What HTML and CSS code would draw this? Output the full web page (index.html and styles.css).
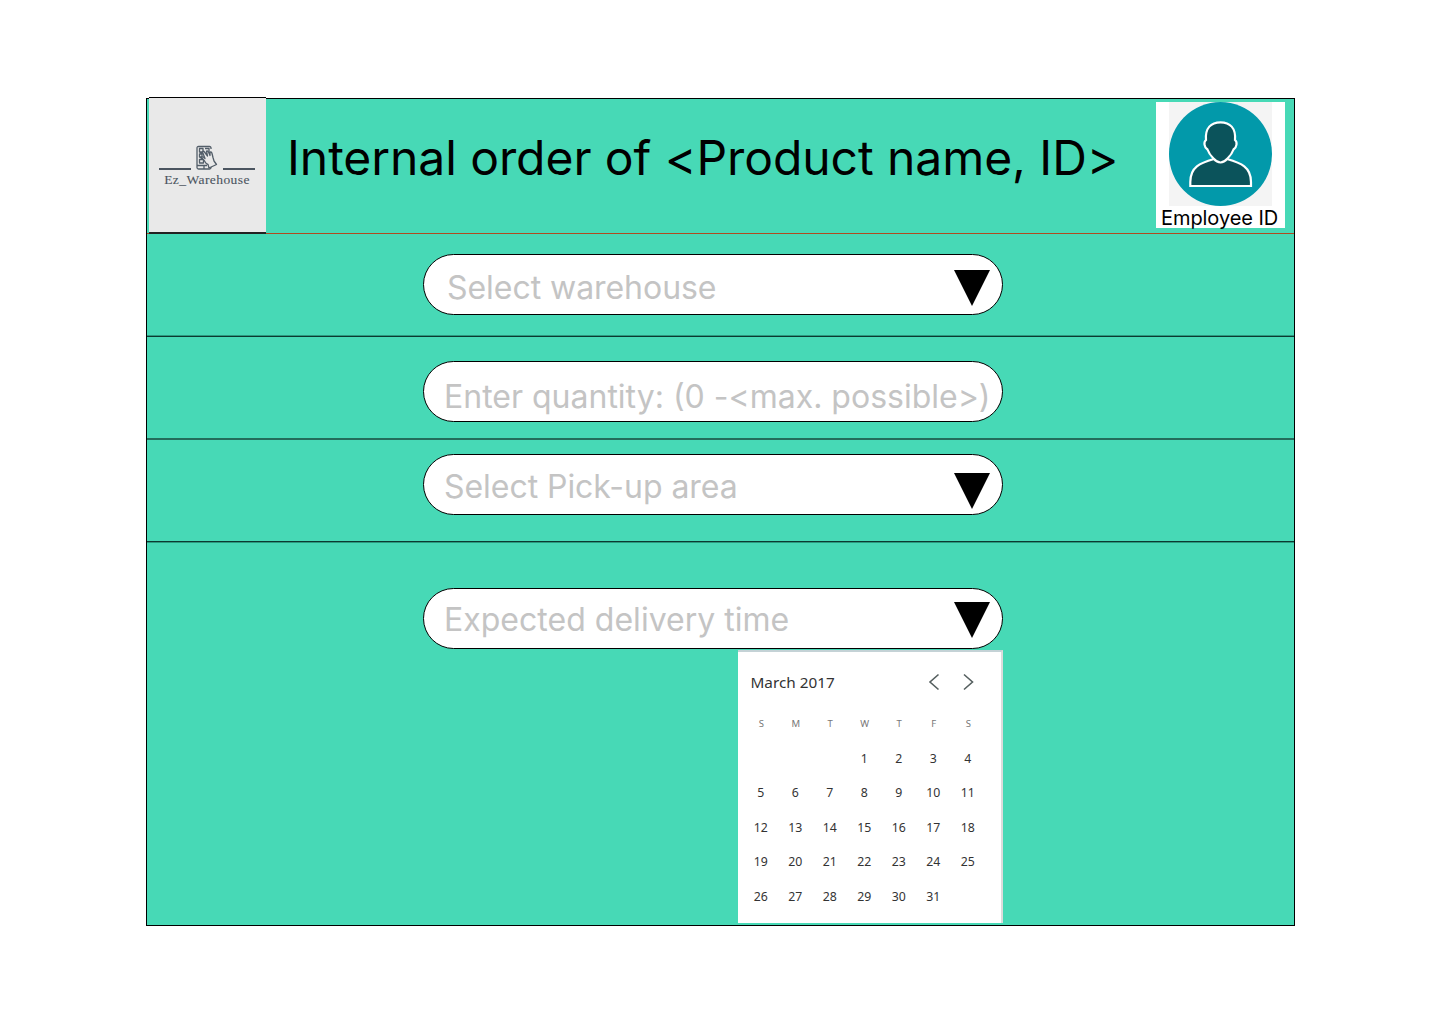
FILE: index.html
```html
<!DOCTYPE html>
<html lang="en">
<head>
<meta charset="utf-8">
<title>Internal order</title>
<link rel="stylesheet" href="styles.css">
</head>
<body>
<main class="frame">
  <header class="header">
    <div class="logo">
      <div class="logo-mark">
        <span class="logo-rule"></span>
        <svg class="logo-icon" width="22" height="26" viewBox="0 0 22 26" fill="none" stroke="#525d68" stroke-width="1.3" stroke-linejoin="round">
          <path d="M15 4V3Q15 1.500 13.500 1.500H2.500Q1 1.500 1 3V22.500Q1 24 2.500 24H13.500Q15 24 15 22.500V21M1 20.500H11"/>
          <path d="M3.500 3.500H7V7H3.500ZM9 3.500H13V7M3.500 9H6V12H3.500ZM3.500 14.500H7.500V18H3.500ZM3.500 7L7 9M3.500 12L7 14M8 21V24"/>
          <path fill="#e9e9e9" d="M8.500 16L5.500 12.500Q6.500 11 8.500 13L9 13.500L6.500 7Q7.500 5.500 8.500 7L11.500 11L10.500 6Q12 5.500 12.500 7L14 10.500L14 7Q15.500 6.500 16 8.500L17 12.500L18 16L20.500 19.500L13 23L12 19.500Q10 19 8.500 16Z"/>
        </svg>
        <span class="logo-rule"></span>
      </div>
      <div class="logo-name">Ez_Warehouse</div>
    </div>
    <h1 class="title">Internal order of &lt;Product name, ID&gt;</h1>
    <div class="employee">
      <svg class="avatar" width="103" height="104" viewBox="0 0 103 104">
        <path fill="#f4f4f4" d="M0 0H103V104H0Z"/>
        <ellipse cx="51.500" cy="52" rx="51.500" ry="52" fill="#0299aa"/>
        <g fill="#0b535b" stroke="#fff" stroke-width="2.200">
          <path d="M21.300 84V80C21.300 65 31 61 45 57H58C72 61 82 65 82 80V84Z"/>
          <path d="M37 38C36 26 42 20.300 51.500 20.300S67 26 66 38C68.500 40 68 45 64.500 47.500C63 52 61 54 58.500 56.500Q55 60.500 51.500 60.500T44.500 56.500C42 54 40 52 38.500 47.500C35 45 34.500 40 37 38Z"/>
        </g>
      </svg>
      <div class="employee-label">Employee ID</div>
    </div>
  </header>
  <section class="row row-warehouse">
    <div class="field"><span>Select warehouse</span><svg class="arrow" width="36" height="36"><path d="M0 0H36L18 36Z"/></svg></div>
  </section>
  <section class="row row-quantity">
    <div class="field"><span>Enter quantity: (0 -&lt;max. possible&gt;)</span></div>
  </section>
  <section class="row row-pickup">
    <div class="field"><span>Select Pick-up area</span><svg class="arrow" width="36" height="36"><path d="M0 0H36L18 36Z"/></svg></div>
  </section>
  <section class="row row-delivery">
    <div class="field"><span>Expected delivery time</span><svg class="arrow" width="36" height="36"><path d="M0 0H36L18 36Z"/></svg></div>
    <div class="calendar">
      <div class="calendar-head">
        <span>March 2017</span>
        <svg width="46" height="18" viewBox="0 0 46 18" fill="none" stroke="#555f5f" stroke-width="1.600"><path d="M10.500 1.500L2 9L10.500 16.500M36 1.500L44.500 9L36 16.500"/></svg>
      </div>
      <div class="days week">
        <span>S</span><span>M</span><span>T</span><span>W</span><span>T</span><span>F</span><span>S</span>
      </div>
      <div class="days dates">
        <span></span><span></span><span></span><span>1</span><span>2</span><span>3</span><span>4</span>
        <span>5</span><span>6</span><span>7</span><span>8</span><span>9</span><span>10</span><span>11</span>
        <span>12</span><span>13</span><span>14</span><span>15</span><span>16</span><span>17</span><span>18</span>
        <span>19</span><span>20</span><span>21</span><span>22</span><span>23</span><span>24</span><span>25</span>
        <span>26</span><span>27</span><span>28</span><span>29</span><span>30</span><span>31</span><span></span>
      </div>
    </div>
  </section>
</main>
</body>
</html>
```
FILE: styles.css
```css
* { box-sizing: border-box; }
body { margin: 0; background: #fff; font-family: Inter, sans-serif; color: #000; }
.frame { width: 1149px; height: 828px; margin: 98px 0 0 146px; background: #47d9b6; border: 1px solid #000; }
.header { display: flex; height: 135px; border-bottom: 1px solid #b04a20; }
.logo { width: 117px; height: 137px; margin: -2px 0 0 2px; padding-top: 47px; background: #e9e9e9; border-top: 1px solid #000; border-bottom: 2px solid #222; }
.logo-mark { display: flex; justify-content: center; height: 26px; gap: 5px; padding-right: 1px; }
.logo-rule { width: 32px; height: 2px; margin-top: 23px; background: #4b5560; }
.logo-name { padding: 1px 1px 0 0; font: 13.5px/16px "Liberation Serif", serif; color: #4b5560; text-align: center; letter-spacing: .42px; -webkit-text-stroke: .1px #4b5560; }
.title { margin: 30px 0 0 21px; font-size: 48px; line-height: 58px; font-weight: 400; letter-spacing: -.06px; white-space: nowrap; }
.employee { width: 129px; height: 126px; margin: 3px 9px 0 auto; background: #fff; }
.avatar { display: block; margin-left: 13px; }
.employee-label { padding-left: 5px; font-size: 20px; line-height: 24px; letter-spacing: -.07px; white-space: nowrap; }
.row { height: 103px; padding-left: 276px; }
.row-warehouse { padding-top: 20px; background: linear-gradient(#2b9a80 0 1px, #0b3a30 1px) bottom / 100% 2px no-repeat; }
.row-quantity { padding-top: 24px; background: linear-gradient(#236c5b, #236c5b) bottom / 100% 2px no-repeat; }
.row-pickup { padding-top: 14px; background: linear-gradient(#0b3a30 0 1px, #2b9a80 1px) bottom / 100% 2px no-repeat; }
.row-delivery { height: auto; padding-top: 45px; }
.field { display: flex; justify-content: space-between; width: 580px; height: 61px; padding: 0 12px 0 20px; background: #fff; border: 1px solid #000; border-radius: 31px; color: #c4c4c4; font-size: 32px; line-height: 39px; letter-spacing: -.05px; white-space: nowrap; }
.field span { margin-top: 12px; }
.arrow { margin-top: 13px; fill: #000; }
.row-warehouse .field { padding-left: 23px; }
.row-warehouse .field span { margin-top: 13px; }
.row-warehouse .arrow { margin-top: 15px; }
.row-quantity .field span { margin-top: 15px; }
.row-quantity .field { letter-spacing: 0; }
.row-pickup .arrow { margin-top: 18px; }
.row-delivery .field { letter-spacing: .02px; }
.row-delivery .field span { margin-top: 11px; }
.calendar { width: 265px; height: 273px; margin: 1px 0 0 315px; background: #fff; border-top: 2px solid #c4d2d6; border-right: 2px solid #dcdcdc; font-family: "Noto Sans", sans-serif; color: #333; }
.calendar-head { display: flex; justify-content: space-between; height: 41px; padding: 21px 27px 0 12.5px; font-size: 15.3px; line-height: 18px; }
.days { display: grid; grid-template-columns: repeat(7, 34.500px); padding-left: 5.5px; text-align: center; }
.week { padding: 21px 0 0 6px; font-size: 9.5px; line-height: 20px; color: #777; }
.dates { padding-top: 6.6px; grid-auto-rows: 34.600px; font-size: 12.3px; line-height: 35px; }
```
